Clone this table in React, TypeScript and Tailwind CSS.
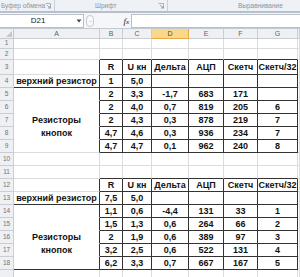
import React from 'react';

const colWidths = ['w-[86px]', 'w-[23px]', 'w-[29px]', 'w-[37px]', 'w-[35px]', 'w-[34px]', 'w-[40px]', 'w-[2px]'];
const colNames = ['A', 'B', 'C', 'D', 'E', 'F', 'G', ''];

// row heights, index = row number
const rowHeights: Record<number, string> = {
  1: 'h-[10px]',
  2: 'h-[11px]',
  3: 'h-[15px]',
  19: 'h-[13px]',
};

const headRow = ['', 'R', 'U кн', 'Дельта', 'АЦП', 'Скетч', 'Скетч/32'];

const data: Record<number, string[]> = {
  3: headRow,
  4: ['верхний резистор', '1', '5,0', '', '', '', ''],
  5: ['', '2', '3,3', '-1,7', '683', '171', ''],
  6: ['', '2', '4,0', '0,7', '819', '205', '6'],
  7: ['Резисторы', '2', '4,3', '0,3', '878', '219', '7'],
  8: ['кнопок', '4,7', '4,6', '0,3', '936', '234', '7'],
  9: ['', '4,7', '4,7', '0,1', '962', '240', '8'],
  12: headRow,
  13: ['верхний резистор', '7,5', '5,0', '', '', '', ''],
  14: ['', '1,1', '0,6', '-4,4', '131', '33', '1'],
  15: ['', '1,5', '1,3', '0,6', '264', '66', '2'],
  16: ['Резисторы', '2', '1,9', '0,6', '389', '97', '3'],
  17: ['кнопок', '3,2', '2,5', '0,6', '522', '131', '4'],
  18: ['', '6,2', '3,3', '0,7', '667', '167', '5'],
};

const boxed = (r: number, c: number) =>
  ((r >= 3 && r <= 9) || (r >= 12 && r <= 18)) && c >= 1 && c <= 6;

const mergedA = [5, 6, 7, 8, 14, 15, 16, 17];

function cellClass(r: number, c: number) {
  const right = boxed(r, c) || boxed(r, c + 1) ? 'border-r-[#333]' : 'border-r-[#dadcdd]';
  let bottom = 'border-b-[#dadcdd]';
  if (boxed(r, c) || boxed(r + 1, c)) bottom = 'border-b-[#333]';
  if (c === 0 && (r === 4 || r === 13 || r === 18)) bottom = 'border-b-[#333]';
  if (c === 0 && mergedA.includes(r)) bottom = 'border-b-white';
  return `${right} ${bottom}`;
}

const Launcher = () => (
  <svg width="6" height="6" viewBox="0 0 6 6" className="shrink-0">
    <path d="M0.5 0.5h5v5" fill="none" stroke="#a9b1bc" strokeWidth="1" />
    <path d="M2 2l3 3M3 5h2V3" fill="none" stroke="#8d96a2" strokeWidth="0.8" />
  </svg>
);

export default function App() {
  const rows = Array.from({ length: 19 }, (_, i) => i + 1);

  return (
    <div className="w-[300px] h-[277px] overflow-hidden bg-white font-['Liberation_Sans',sans-serif] select-none">
      {/* ribbon group captions */}
      <div className="flex h-[11px] bg-[#eef2f7] text-[6.5px] text-[#8a939f] leading-[11px] whitespace-nowrap">
        <div className="w-[55px] shrink-0 flex items-center justify-between pl-[1px] pr-[3px] border-r border-[#c9d0da]">
          <span>Буфер обмена</span>
          <Launcher />
        </div>
        <div className="w-[113px] shrink-0 flex items-center justify-between pl-[40px] pr-[3px] border-r border-[#c9d0da]">
          <span>Шрифт</span>
          <Launcher />
        </div>
        <div className="flex-1 flex items-center pl-[70px]">
          <span>Выравнивание</span>
        </div>
      </div>
      <div className="h-[2px] bg-[#b9c0ca]" />

      {/* formula bar */}
      <div className="flex h-[16px] bg-[#f4f6f9] border-b border-[#c3c9d1] pt-[1px]">
        <div className="w-[84px] h-[14px] bg-white border border-l-0 border-[#b9c0c9] flex items-center">
          <span className="w-[76px] text-center text-[8px] text-[#222]">D21</span>
          <svg width="6" height="4" viewBox="0 0 6 4">
            <path d="M0.5 0.5h5L3 3.5z" fill="#444" />
          </svg>
        </div>
        <div className="w-[8px] h-[12px] mt-[1px] ml-[2px] rounded-full border border-[#c4cad2] bg-[#f8f9fb] flex items-center justify-center">
          <div className="w-[3px] h-[1px] bg-[#d6dbe1]" />
        </div>
        <div className="w-[37px] flex items-center justify-end pr-[2px]">
          <span className="italic font-['Liberation_Serif',serif] text-[9px] text-[#222] leading-none">
            f<span className="text-[7px]">x</span>
          </span>
        </div>
        <div className="flex-1 h-[14px] bg-white border border-r-0 border-[#b9c0c9]" />
      </div>

      {/* sheet */}
      <div className="flex flex-col text-[#111]">
        {/* column headers */}
        <div className="flex h-[10px] text-[7px] text-[#5a6472] leading-none">
          <div className="w-[14px] bg-[#eef0f3] border-r border-b border-[#c3c8cf] flex items-end justify-end p-[1px]">
            <svg width="6" height="6" viewBox="0 0 6 6">
              <path d="M6 0v6H0z" fill="#c3c8cf" />
            </svg>
          </div>
          {colNames.map((n, i) =>
            n === 'D' ? (
              <div
                key={i}
                className={`${colWidths[i]} bg-[#fbd889] border-r border-b border-[#e6ab47] flex items-center justify-center text-[#5a4a2a]`}
              >
                {n}
              </div>
            ) : (
              <div
                key={i}
                className={`${colWidths[i]} bg-[#eef0f3] border-r border-b border-[#c9ced5] flex items-center justify-center`}
              >
                {n}
              </div>
            )
          )}
        </div>

        {rows.map((r) => {
          const h = rowHeights[r] ?? 'h-[13px]';
          const vals = data[r] ?? [];
          return (
            <div key={r} className={`flex ${h} shrink-0`}>
              <div className="w-[14px] bg-[#eef0f3] border-r border-b border-[#c9ced5] flex items-center justify-center text-[6.5px] text-[#6a7380] leading-none">
                {/* row 19 falls below the window edge */}
                {r < 19 ? r : ''}
              </div>
              {colWidths.map((w, c) => (
                <div
                  key={c}
                  className={`${w} border-r border-b ${cellClass(r, c)} flex items-center justify-center text-[9px] font-bold leading-none whitespace-nowrap overflow-hidden`}
                >
                  {vals[c] ?? ''}
                </div>
              ))}
            </div>
          );
        })}
      </div>
    </div>
  );
}
